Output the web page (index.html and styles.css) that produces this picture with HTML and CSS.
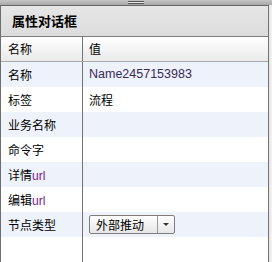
FILE: index.html
```html
<!DOCTYPE html>
<html lang="zh">
<head>
    <meta charset="UTF-8">
    <title>属性对话框</title>
    <link rel="stylesheet" href="styles.css">
</head>
<body>
    <div class="topbar"><span class="grip"></span></div>
    <div class="panel">
        <div class="panel-title">属性对话框</div>
        <table class="props">
            <tr class="head">
                <th class="key">名称</th>
                <th>值</th>
            </tr>
            <tr class="alt">
                <td class="key">名称</td>
                <td class="name">Name2457153983</td>
            </tr>
            <tr>
                <td class="key">标签</td>
                <td>流程</td>
            </tr>
            <tr class="alt">
                <td class="key">业务名称</td>
                <td></td>
            </tr>
            <tr>
                <td class="key">命令字</td>
                <td></td>
            </tr>
            <tr class="alt">
                <td class="key">详情<span class="latin">url</span></td>
                <td></td>
            </tr>
            <tr>
                <td class="key">编辑<span class="latin">url</span></td>
                <td></td>
            </tr>
            <tr class="alt">
                <td class="key">节点类型</td>
                <td>
                    <div class="combo">
                        <span class="combo-text">外部推动</span>
                        <span class="combo-arrow"></span>
                    </div>
                </td>
            </tr>
        </table>
    </div>
</body>
</html>
```

FILE: styles.css
```css
html, body {
    margin: 0;
    padding: 0;
}
body {
    width: 272px;
    height: 262px;
    overflow: hidden;
    background: linear-gradient(to right, #ffffff 0, #ffffff 269px, #e4e4e4 269px, #f4f4f4 272px);
    font-family: "Noto Sans CJK SC", "Liberation Sans", sans-serif;
    font-size: 12px;
    color: #000;
    display: flex;
    flex-direction: column;
}
.topbar {
    height: 5px;
    background: linear-gradient(to bottom, #c4c4c4, #a8a8a8);
    display: flex;
    justify-content: center;
}
.grip {
    width: 16px;
    height: 1px;
    margin-top: 1px;
    border-top: 1px solid #555;
    border-bottom: 1px solid #555;
    background: #e8e8e8;
}
/* the key column divider runs down to the bottom of the panel */
.panel {
    width: 267px;
    flex: 1;
    border-top: 1px solid #676767;
    border-left: 1px solid #6e6e6e;
    border-right: 1px solid #747474;
    background: linear-gradient(to right, #fff 81px, #727272 81px, #727272 82px, #fff 82px);
}
.panel-title {
    height: 30px;
    line-height: 30px;
    padding-left: 11px;
    font-size: 13px;
    font-weight: bold;
    background: linear-gradient(to bottom, #e6e6e6, #dcdcdc);
    border-bottom: 1px solid #7c7c7c;
}
.props {
    width: 100%;
    border-collapse: collapse;
    table-layout: fixed;
}
.props th, .props td {
    height: 25px;
    padding: 0 0 0 6px;
    text-align: left;
    font-weight: normal;
    white-space: nowrap;
    line-height: 25px;
    overflow: hidden;
}
.props .key {
    width: 74px;
    padding-left: 7px;
    border-right: 1px solid #727272;
}
.props .head th {
    height: 24px;
    line-height: 24px;
    background: linear-gradient(to bottom, #ffffff, #e9e9e9);
    border-bottom: 1px solid #a9a9a9;
}
.props .alt td {
    background: #eef2fa;
}
.name {
    font-family: "Liberation Sans", sans-serif;
    font-size: 12.5px;
    color: #3a2b58;
}
.latin {
    font-family: "Liberation Sans", sans-serif;
    line-height: 12px;
    color: #7a1a8a;
}
.combo {
    width: 84px;
    height: 17px;
    border: 1px solid #7d7d7d;
    border-radius: 2px;
    background: linear-gradient(to bottom, #ffffff, #e6e6e6);
    display: flex;
    align-items: center;
    margin-top: 3px;
    margin-bottom: 3px;
    line-height: 17px;
}
.combo-text {
    width: 61px;
    height: 17px;
    padding-left: 6px;
    border-right: 1px solid #9a9a9a;
}
.combo-arrow {
    flex: 1;
    display: flex;
    justify-content: center;
}
.combo-arrow::before {
    content: "";
    border-left: 3px solid transparent;
    border-right: 3px solid transparent;
    border-top: 3px solid #333;
}
```
